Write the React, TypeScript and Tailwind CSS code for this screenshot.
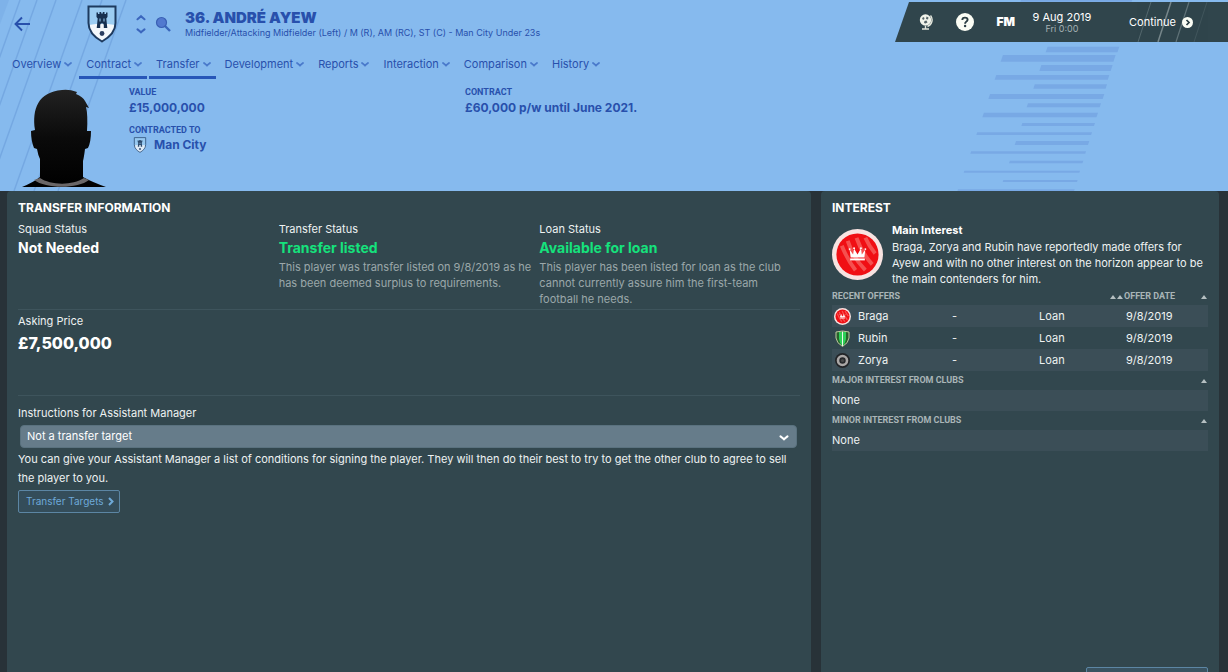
import type { ReactNode } from "react";

const navItems = [
  { label: "Overview", active: false },
  { label: "Contract", active: true },
  { label: "Transfer", active: true },
  { label: "Development", active: false },
  { label: "Reports", active: false },
  { label: "Interaction", active: false },
  { label: "Comparison", active: false },
  { label: "History", active: false },
];

/* x start, x end, y start, y end of each decorative bar */
const bars = [
  [421, 758, -4, 5], [497, 718, 140, 157], [362, 707, 165, 185], [478, 698, 195, 213],
  [344, 688, 225, 239], [460, 681, 253, 266], [325, 673, 282, 297], [440, 663, 310, 322],
  [307, 654, 338, 352], [424, 645, 369, 378], [289, 636, 397, 405], [404, 628, 423, 435],
  [271, 618, 454, 461], [387, 610, 482, 490], [251, 600, 512, 518], [368, 593, 540, 546],
  [232, 584, 568, 574],
];

const stripes = [20, 37, 56, 82, 102, 126];

function HeaderArt() {
  return (
    <>
      <svg className="absolute left-0 top-0" width="180" height="191" viewBox="0 0 180 191" aria-hidden="true">
        <path d="M0 0H9L0 24Z" fill="#6fa3e0" opacity="0.35" />
        {stripes.map((x) => (
          <path key={x} d={`M${x} 0L${x - 68} 191`} stroke="#6c9fdc" strokeWidth="1.4" opacity="0.65" />
        ))}
      </svg>
      <svg className="absolute right-0 top-0" width="348" height="191" viewBox="0 0 1044 573" aria-hidden="true">
        {bars.map(([x1, x2, y1, y2]) => {
          const s = (y2 - y1) / 3;
          return <path key={y1} d={`M${x1 + s} ${y1}H${x2}L${x2 - s} ${y2}H${x1}Z`} fill="#78a9e5" />;
        })}
      </svg>
    </>
  );
}

function CityShield({ className }: { className: string }) {
  return (
    <svg className={className} viewBox="0 0 30 38" aria-hidden="true">
      <path d="M1.500 1.500H28.500V18C28.500 27 22 32.500 15 36.500C8 32.500 1.500 27 1.500 18Z" fill="#9ccdf2" />
      <path d="M1.500 20L9 19H21L28.500 20C27.500 28 22 32.500 15 36.500C8 32.500 2.500 28 1.500 20Z" fill="#f4f8fb" />
      <path d="M9.500 7.500H11V9H12.500V7H14.200V8.500H15.800V7H17.500V9H19V7.500H20.500V12L19.300 13.500L20.300 23H16.800V20A1.800 1.800 0 0 0 13.200 20V23H9.700L10.700 13.500L9.500 12Z" fill="#17304f" />
      <path d="M12.500 13.500H13.500V16.500H12.500ZM16.500 13.500H17.500V16.500H16.500Z" fill="#9ccdf2" />
      <circle cx="15" cy="28.500" r="2.400" fill="#2a3e60" />
      <path d="M1.500 1.500H28.500V18C28.500 27 22 32.500 15 36.500C8 32.500 1.500 27 1.500 18Z" fill="none" stroke="#1d3a5f" strokeWidth="2" />
    </svg>
  );
}

function Chevron({ className, d = "M1 2Q3 3.500 4 4.500Q5 3.500 7 2" }: { className: string; d?: string }) {
  return (
    <svg className={className} viewBox="0 0 8 6" fill="none" stroke="currentColor" aria-hidden="true">
      <path d={d} strokeWidth="1.800" strokeLinecap="round" />
    </svg>
  );
}

function BragaBadge({ className }: { className: string }) {
  return (
    <svg className={className} viewBox="0 0 52 52" aria-hidden="true">
      <circle cx="26" cy="26" r="26" fill="#f8e3e1" />
      <circle cx="26" cy="26" r="21.500" fill="#f00f14" />
      <g stroke="#f5504f" strokeWidth="4" fill="none">
        <path d="M10 17Q16 32 24 42M16 12Q22 30 34 42M25 9Q30 24 41 36M34 9Q38 18 44 25" />
      </g>
      <path d="M18 21L21.500 26L22.500 20L26 26L29.500 20L30.500 26L34 21L33 29H19Z" fill="#fff" />
      <path d="M18.500 30H33.500V32H18.500Z" fill="#fff" />
      <circle cx="18" cy="20.500" r="1" fill="#fff" />
      <circle cx="22.500" cy="19.500" r="1" fill="#fff" />
      <circle cx="29.500" cy="19.500" r="1" fill="#fff" />
      <circle cx="34" cy="20.500" r="1" fill="#fff" />
    </svg>
  );
}

function RubinBadge() {
  return (
    <svg className="size-[17px]" viewBox="0 0 17 17" aria-hidden="true">
      <path d="M2 2Q8.500 0 15 2V8Q14.500 13 8.500 16.500Q2.500 13 2 8Z" fill="#27622c" stroke="#bfc9a0" strokeWidth="1" />
      <path d="M5 2H8V15.500Q5.500 13 5 9ZM9 2H12V9Q11.500 13 9 15.500Z" fill="#2ecf57" />
      <path d="M8 1.500H9V16H8Z" fill="#e9f7ea" />
    </svg>
  );
}

function ZoryaBadge() {
  return (
    <svg className="size-[17px]" viewBox="0 0 17 17" aria-hidden="true">
      <circle cx="8.500" cy="8.500" r="7.500" fill="#222427" />
      <circle cx="8.500" cy="8.500" r="4.500" fill="#26282b" stroke="#aaa7a6" strokeWidth="2.600" />
      <circle cx="8.500" cy="8.500" r="1.600" fill="#4a4a4a" />
    </svg>
  );
}

function Portrait() {
  return (
    <svg className="mt-2 h-[101px] w-[84px] shrink-0" viewBox="0 0 84 101" aria-hidden="true">
      <defs>
        <linearGradient id="skin" x1="0" y1="0" x2="0" y2="1">
          <stop offset="0" stopColor="#222" />
          <stop offset="0.500" stopColor="#0a0a0a" />
          <stop offset="1" stopColor="#000" />
        </linearGradient>
      </defs>
      <path d="M13 43C10 22 16 5 40 3Q47 2 55 5L54 7Q61 10 63 14L67 21L64 20Q66 28 65 44L69 44Q69 55 66 61L63 62Q62 70 61 74V90Q70 95 84 100H0Q12 95 18 90V72Q16 68 15 62L12 61Q9 54 9 44Z" fill="url(#skin)" />
      <path d="M18 91C28 98 50 99 62 91L67 93C56 102 24 102 12 93Z" fill="#6a6768" />
    </svg>
  );
}

function GlobeIcon() {
  return (
    <svg className="h-4 w-[14px]" viewBox="0 0 14 16" aria-hidden="true">
      <circle cx="6.500" cy="6" r="5.700" fill="#f1f3ea" />
      <path d="M11.500 1.500A7 7 0 0 1 8.500 12.500M6.500 12V15M3 15H10" stroke="#e3e6dc" strokeWidth="1.400" fill="none" />
      <path d="M3 4L5 3L5.500 5L4 6ZM7.500 2.500L9.500 3.500L9 5.500L7 5ZM5.500 7L7.500 6.500L8.500 8.500L6.500 9.500L5 9Z" fill="#566468" />
    </svg>
  );
}

function HelpIcon() {
  return (
    <svg className="size-[18px]" viewBox="0 0 18 18" aria-hidden="true">
      <circle cx="9" cy="9" r="9" fill="#fbfdf4" />
      <path d="M6.300 7Q6.300 4.600 9 4.600Q11.600 4.600 11.600 6.800Q11.600 8 10.200 8.800Q9.100 9.500 9.100 10.700" fill="none" stroke="#2b3d42" strokeWidth="1.900" />
      <circle cx="9.100" cy="13" r="1.200" fill="#2b3d42" />
    </svg>
  );
}

function TopBar() {
  return (
    <div className="relative mt-[2px] flex h-10 w-[333px] shrink-0 items-center bg-[#30454c] text-white [clip-path:polygon(14px_0,100%_0,100%_100%,0_100%)]">
      <svg className="absolute left-[236px] top-0 opacity-40" width="80" height="40" viewBox="0 0 80 40" fill="none" aria-hidden="true">
        <path d="M20 0L7 40" stroke="#8a9a9f" strokeWidth="1" />
        <path d="M40 0L27 40" stroke="#e2e8e8" strokeWidth="1.500" />
        <path d="M58 0L45 40" stroke="#a9b7ba" strokeWidth="1.200" />
        <path d="M76 0L63 40" stroke="#5c6e74" strokeWidth="1" />
      </svg>
      <div className="flex w-[120px] items-center justify-between pl-6">
        <button aria-label="World" className="flex"><GlobeIcon /></button>
        <button aria-label="Help" className="flex"><HelpIcon /></button>
        <button className="text-[12px] font-black leading-4">FM</button>
      </div>
      <div className="flex w-[94px] flex-col items-center">
        <span className="text-[11px] leading-[12px]">9 Aug 2019</span>
        <span className="text-[9px] leading-[11px] text-[#a5b1b4]">Fri 0:00</span>
      </div>
      <button className="relative ml-5 flex items-center gap-[6px] text-[11px] leading-4">
        Continue
        <svg className="size-[11px]" viewBox="0 0 11 11" aria-hidden="true">
          <circle cx="5.500" cy="5.500" r="5.500" fill="#fbfdf4" />
          <path d="M4.500 3L7 5.500L4.500 8" fill="none" stroke="#2b3d42" strokeWidth="1.700" />
        </svg>
      </button>
    </div>
  );
}

function Header() {
  return (
    <header className="relative h-[191px] shrink-0 overflow-hidden bg-[#86baee] text-[#2850ac]">
      <HeaderArt />
      <div className="relative">
        <div className="flex h-12 items-start justify-between">
          <div className="flex h-12 items-center">
            <button aria-label="Back" className="ml-[14px] flex">
              <svg width="17" height="16" viewBox="0 0 17 16" fill="none" stroke="currentColor" strokeWidth="1.900" aria-hidden="true">
                <path d="M16 8H2M8 1.500L1.500 8L8 14.500" />
              </svg>
            </button>
            <CityShield className="ml-[56px] h-[38px] w-[30px]" />
            <div className="ml-[19px] flex flex-col gap-[6px] text-[#3b66bd]">
              <button aria-label="Previous player" className="flex"><Chevron className="h-[7px] w-[10px]" d="M1 4.500Q3 3 4 2Q5 3 7 4.500" /></button>
              <button aria-label="Next player" className="flex"><Chevron className="h-[7px] w-[10px]" /></button>
            </div>
            <button aria-label="Search" className="ml-[9px] flex">
              <svg width="16" height="16" viewBox="0 0 16 16" aria-hidden="true">
                <path d="M10 10L15 15" stroke="#3a66bb" strokeWidth="2.400" />
                <circle cx="6.500" cy="6.500" r="5" fill="#5279cf" stroke="#3a60b4" strokeWidth="1.200" />
              </svg>
            </button>
            <div className="ml-[14px]">
              <h1 className="text-[15px] font-black leading-[18px]">36. ANDRÉ AYEW</h1>
              <p className="text-[9px] leading-3">Midfielder/Attacking Midfielder (Left) / M (R), AM (RC), ST (C) - Man City Under 23s</p>
            </div>
          </div>
          <TopBar />
        </div>
        <nav className="flex gap-[2px] pl-[5px] pt-1">
          {navItems.map((item) => (
            <button
              key={item.label}
              className={`flex h-[27px] items-center gap-[3px] border-b-[3px] pl-[7px] pr-[5px] text-[11px] leading-4 ${item.active ? "border-[#2756b8]" : "border-transparent"}`}
            >
              {item.label}
              <Chevron className="h-[6px] w-2 text-[#4a7acb]" />
            </button>
          ))}
        </nav>
        <div className="flex pl-[22px]">
          <Portrait />
          <dl className="ml-[23px] mt-[7px] w-[336px] text-[12px] font-bold">
            <dt className="font-[Roboto,sans-serif] text-[9px] leading-3">VALUE</dt>
            <dd className="mt-[2px] leading-4">£15,000,000</dd>
            <dt className="mt-2 font-[Roboto,sans-serif] text-[9px] leading-3">CONTRACTED TO</dt>
            <dd className="mt-px flex items-center gap-[7px] pl-1 leading-4">
              <CityShield className="h-[16px] w-[14px] opacity-80" />
              Man City
            </dd>
          </dl>
          <dl className="mt-[7px] text-[12px] font-bold">
            <dt className="font-[Roboto,sans-serif] text-[9px] leading-3">CONTRACT</dt>
            <dd className="mt-[2px] leading-4">£60,000 p/w until June 2021.</dd>
          </dl>
        </div>
      </div>
    </header>
  );
}

function Status({ label, value, good, children }: { label: string; value: string; good?: boolean; children?: ReactNode }) {
  return (
    <div className="pr-[7px]">
      <h3 className="leading-4">{label}</h3>
      <p className={`mt-px text-[14px] font-bold leading-5 ${good ? "text-[#15e27c]" : "text-white"}`}>{value}</p>
      <p className="mt-px leading-4 text-[#9ba8aa]">{children}</p>
    </div>
  );
}

function SortMark() {
  return (
    <svg className="h-1 w-[6px]" viewBox="0 0 6 4" aria-hidden="true">
      <path d="M0 4L3 0L6 4Z" fill="#b5bfc1" />
    </svg>
  );
}

const offers = [
  { club: "Braga", badge: <BragaBadge className="size-[17px]" /> },
  { club: "Rubin", badge: <RubinBadge /> },
  { club: "Zorya", badge: <ZoryaBadge /> },
];

function InterestList({ title }: { title: string }) {
  return (
    <section>
      <h3 className="flex h-[19px] items-center justify-between pr-px font-[Roboto,sans-serif] text-[9px] font-bold text-[#a9b5b7]">
        {title}
        <SortMark />
      </h3>
      <p className="h-[21px] bg-[#3b4e57] leading-5">None</p>
    </section>
  );
}

export default function App() {
  return (
    <div className="flex h-screen flex-col overflow-hidden bg-[#283238] font-[Inter,sans-serif] text-[11px] text-[#eef2f2]">
      <Header />
      <main className="flex min-h-0 flex-1 gap-[10px] pl-[7px] pr-[9px]">
        <section className="min-w-0 flex-1 rounded-t bg-[#32474e] px-[11px] pt-2">
          <h2 className="text-[12px] font-bold leading-[18px] text-white">TRANSFER INFORMATION</h2>
          <div className="mt-1 grid grid-cols-3 border-b border-[#3e545c] pb-[2px]">
            <Status label="Squad Status" value="Not Needed" />
            <Status label="Transfer Status" value="Transfer listed" good>
              This player was transfer listed on 9/8/2019 as he has been deemed surplus to requirements.
            </Status>
            <Status label="Loan Status" value="Available for loan" good>
              This player has been listed for loan as the club cannot currently assure him the first-team football he needs.
            </Status>
          </div>
          <div className="h-[86px] border-b border-[#3e545c] pt-[3px]">
            <h3 className="leading-4">Asking Price</h3>
            <p className="mt-1 text-[16px] font-extrabold leading-5 text-white">£7,500,000</p>
          </div>
          <label htmlFor="instructions" className="mt-[9px] block leading-4">Instructions for Assistant Manager</label>
          <div className="relative ml-[2px] mr-[3px] mt-1">
            <select id="instructions" className="block h-[23px] w-full appearance-none rounded border border-[#5a727f] bg-[#667c8a] pl-[6px] text-[11px] text-white">
              <option>Not a transfer target</option>
            </select>
            <Chevron className="pointer-events-none absolute right-2 top-[9px] h-[7px] w-[10px] text-white" />
          </div>
          <p className="mt-[2px] leading-[19px]">
            You can give your Assistant Manager a list of conditions for signing the player. They will then do their best to try to get the other club to agree to sell the player to you.
          </p>
          <button className="mt-[2px] flex h-[23px] items-center gap-1 rounded-[2px] border border-[#5c86a4] bg-[#344d5a] pl-[7px] pr-[5px] text-[10px] text-[#6ea9d8]">
            Transfer Targets
            <svg className="h-[9px] w-[6px]" viewBox="0 0 6 9" fill="none" stroke="currentColor" strokeWidth="2" aria-hidden="true">
              <path d="M1 1L4.500 4.500L1 8" />
            </svg>
          </button>
        </section>

        <aside className="flex w-[398px] shrink-0 flex-col rounded-t bg-[#32474e] px-[11px] pt-2">
          <h2 className="text-[12px] font-bold leading-[18px] text-white">INTEREST</h2>
          <div className="mt-[5px] flex gap-[9px]">
            <BragaBadge className="mt-[7px] size-[51px] shrink-0" />
            <div className="leading-4">
              <h3 className="font-bold leading-[17px] text-white">Main Interest</h3>
              <p>Braga, Zorya and Rubin have reportedly made offers for Ayew and with no other interest on the horizon appear to be the main contenders for him.</p>
            </div>
          </div>
          <table className="mt-px w-full table-fixed border-collapse text-left">
            <colgroup>
              <col className="w-[26px]" />
              <col className="w-[94px]" />
              <col className="w-[87px]" />
              <col className="w-[71px]" />
              <col />
            </colgroup>
            <thead className="font-[Roboto,sans-serif] text-[9px] text-[#a9b5b7]">
              <tr className="h-[17px]">
                <th colSpan={3} className="p-0 font-bold">RECENT OFFERS</th>
                <th colSpan={2} className="p-0 font-bold">
                  <span className="flex items-center pl-[71px] pr-px">
                    <SortMark />
                    <span className="ml-px mr-px flex"><SortMark /></span>
                    <span className="flex-1">OFFER DATE</span>
                    <SortMark />
                  </span>
                </th>
              </tr>
            </thead>
            <tbody>
              {offers.map((offer) => (
                <tr key={offer.club} className="h-[22px] odd:bg-[#3b4e57]">
                  <td className="p-0 pl-[2px]">{offer.badge}</td>
                  <td className="p-0">{offer.club}</td>
                  <td className="p-0">-</td>
                  <td className="p-0">Loan</td>
                  <td className="p-0 pl-4">9/8/2019</td>
                </tr>
              ))}
            </tbody>
          </table>
          <InterestList title="MAJOR INTEREST FROM CLUBS" />
          <InterestList title="MINOR INTEREST FROM CLUBS" />
          <button aria-label="Make offer" className="-mb-[18px] mt-auto h-[23px] w-[122px] shrink-0 self-end rounded-[2px] border border-[#5c86a4] bg-[#3a5361]" />
        </aside>
      </main>
    </div>
  );
}
